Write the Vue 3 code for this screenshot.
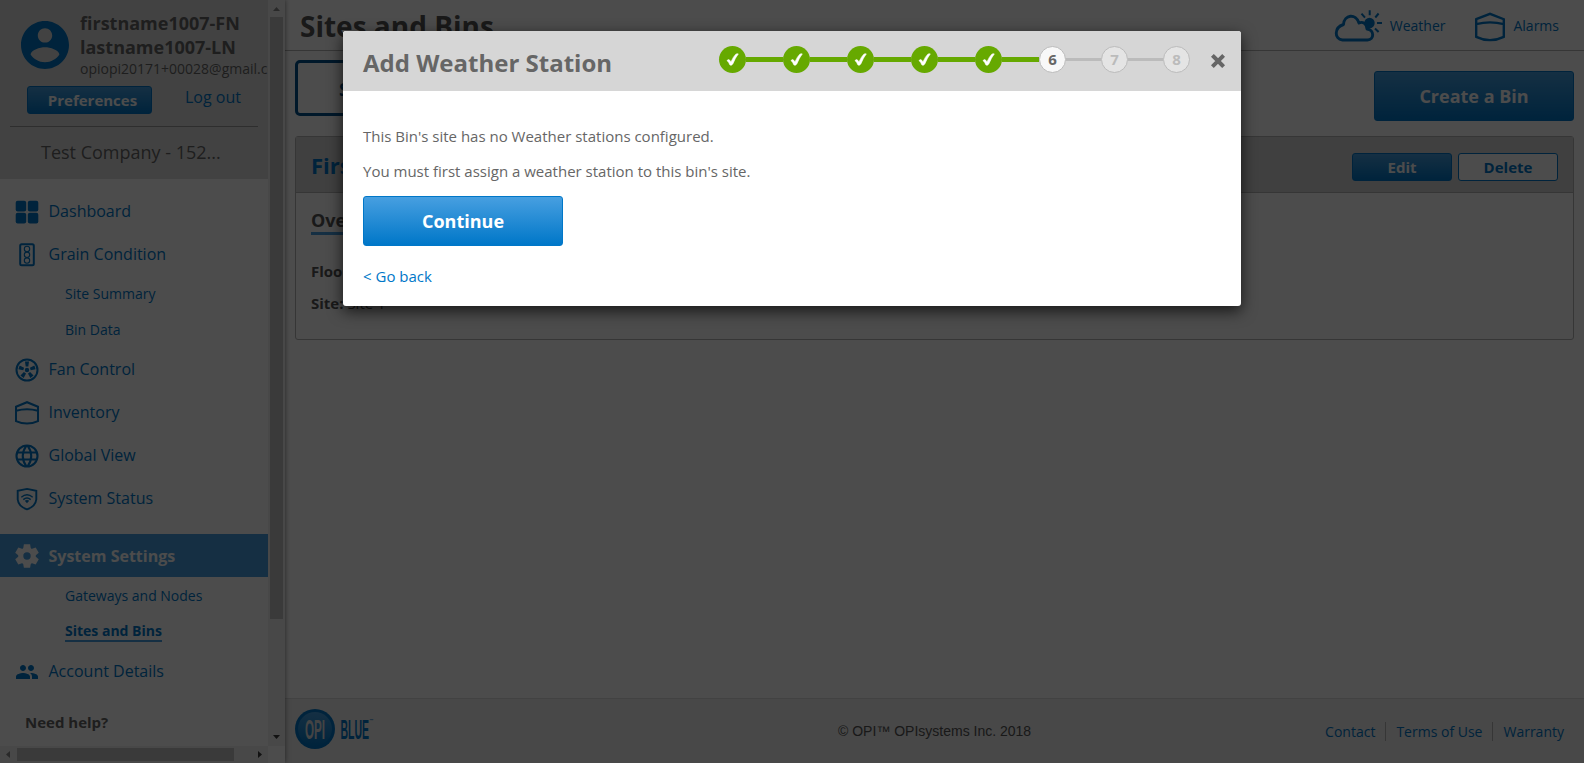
<script setup>
const mainNav = [
  { label: 'Dashboard', icon: 'grid' },
  { label: 'Grain Condition', icon: 'grain', children: ['Site Summary', 'Bin Data'] },
  { label: 'Fan Control', icon: 'fan' },
  { label: 'Inventory', icon: 'bin' },
  { label: 'Global View', icon: 'globe' },
  { label: 'System Status', icon: 'shield' },
]
const doneSteps = [1, 2, 3, 4, 5]
const blades = [0, 72, 144, 216, 288]
const gearTeeth = [0, 60, 120, 180, 240, 300]
</script>

<template>
  <div class="page">
    <aside class="sidebar">
      <div class="side-scroll">
        <div class="profile">
          <div class="user">
            <svg class="avatar" width="48" height="48" viewBox="2 2 20 20">
              <path fill="#0077c8" d="M12 2C6.48 2 2 6.48 2 12s4.48 10 10 10 10-4.48 10-10S17.52 2 12 2zm0 3c1.66 0 3 1.34 3 3s-1.34 3-3 3-3-1.34-3-3 1.34-3 3-3zm0 14.200c-2.500 0-4.710-1.280-6-3.220.03-1.990 4-3.080 6-3.080 1.990 0 5.970 1.090 6 3.080-1.290 1.940-3.500 3.220-6 3.220z" />
            </svg>
            <div class="who">
              <div class="name">firstname1007-FN</div>
              <div class="name">lastname1007-LN</div>
              <div class="email">opiopi20171+00028@gmail.com</div>
            </div>
          </div>
          <div class="user-actions">
            <button class="btn pref">Preferences</button>
            <a class="logout">Log out</a>
          </div>
          <div class="company">Test Company - 152...</div>
        </div>
        <nav class="nav">
          <template v-for="item in mainNav" :key="item.label">
            <a class="nav-item">
              <svg class="nav-icon" width="24" height="24" viewBox="0 0 24 24" fill="none" stroke="#0077c8" stroke-width="2">
                <g v-if="item.icon === 'grid'" fill="#0077c8" stroke="none">
                  <rect x=".7" y=".7" width="10.500" height="10.800" rx="2" /><rect x="12.800" y=".7" width="10.500" height="10.800" rx="2" />
                  <rect x=".7" y="12.800" width="10.500" height="10.800" rx="2" /><rect x="12.800" y="12.800" width="10.500" height="10.800" rx="2" />
                </g>
                <g v-else-if="item.icon === 'grain'">
                  <rect x="5.200" y="1.200" width="13.600" height="21" rx="1.500" />
                  <g stroke-width="1.100"><circle cx="12" cy="6" r="2.700" /><circle cx="12" cy="11.800" r="2.700" /><circle cx="12" cy="17.600" r="2.700" /></g>
                </g>
                <g v-else-if="item.icon === 'fan'">
                  <circle cx="12" cy="12" r="10.500" />
                  <circle cx="12" cy="12" r="2.200" fill="#0077c8" stroke="none" />
                  <path v-for="b in blades" :key="b" d="M10 3.600h4l-.7 4.900h-2.600z" fill="#0077c8" stroke="none" :transform="`rotate(${b} 12 12)`" />
                </g>
                <g v-else-if="item.icon === 'bin'" stroke-width="2">
                  <path d="M1 5.700 12 1.200l11 4.500v14.400Q12 25 1 20.100zM1 9.700Q12 6.700 23 9.700" />
                </g>
                <g v-else-if="item.icon === 'globe'" stroke-width="2.100">
                  <circle cx="12" cy="12" r="10.500" /><path d="M2.500 8.500h19M2.500 15.500h19M11.500 1.500Q4 12 11.500 22.500M12.500 1.500Q20 12 12.500 22.500" />
                </g>
                <g v-else>
                  <path stroke-width="1.900" d="M12 1.900 21.300 3.700v8.800Q20.500 19.500 12 22.300 3.500 19.500 2.700 12.500V3.700z" />
                  <path stroke-width="1.400" d="M6.300 10.300q5.700-5 11.400 0M8.300 12.600q3.700-3.200 7.400 0" /><path d="M9.800 13.800q2.200-1.600 4.400 0L12 16.300z" fill="#0077c8" stroke="none" />
                </g>
              </svg>
              <span>{{ item.label }}</span>
            </a>
            <a v-for="child in item.children" :key="child" class="nav-sub">{{ child }}</a>
          </template>
          <a class="nav-item active">
            <svg class="nav-icon" width="24" height="24" viewBox="0 0 24 24">
              <path v-for="g in gearTeeth" :key="g" fill="#fff" d="M8 5.500 8.900.2h6.200L16 5.500z" :transform="`rotate(${g} 12 12)`" />
              <circle cx="12" cy="12" r="6.200" fill="none" stroke="#fff" stroke-width="5" />
            </svg>
            <span>System Settings</span>
          </a>
          <a class="nav-sub short">Gateways and Nodes</a>
          <a class="nav-sub short current"><span>Sites and Bins</span></a>
          <a class="nav-item account">
            <svg class="nav-icon" width="24" height="24" viewBox="0 0 24 24">
              <path fill="#0077c8" d="M16 11c1.660 0 2.990-1.340 2.990-3S17.660 5 16 5s-3 1.340-3 3 1.340 3 3 3zm-8 0c1.660 0 2.990-1.340 2.990-3S9.660 5 8 5 5 6.340 5 8s1.340 3 3 3zm0 2c-2.330 0-7 1.170-7 3.500V19h14v-2.500c0-2.330-4.670-3.500-7-3.500zm8 0c-.29 0-.62.02-.97.05 1.160.84 1.970 1.970 1.970 3.450V19h6v-2.500c0-2.330-4.670-3.500-7-3.500z" />
            </svg>
            <span>Account Details</span>
          </a>
        </nav>
        <div class="help">Need help?</div>
      </div>
      <div class="vbar">
        <svg width="17" height="17"><path d="M5 11h7L8.500 7z" fill="#8b8b8b" /></svg>
        <div class="vthumb"></div>
        <svg class="down" width="17" height="17"><path d="M5 6h7L8.500 10z" fill="#3c3c3c" /></svg>
      </div>
      <div class="hbar">
        <svg width="17" height="17"><path d="M10 5v7L6 8.500z" fill="#8b8b8b" /></svg>
        <div class="hthumb"></div>
        <svg class="right" width="17" height="17"><path d="M7 5v7l4-3.500z" fill="#3c3c3c" /></svg>
      </div>
      <div class="corner"></div>
    </aside>

    <main class="main">
      <header class="top">
        <h1>Sites and Bins</h1>
        <a class="top-link">
          <svg width="50" height="34" viewBox="0 0 50 34">
            <g stroke="#0077c8" stroke-width="2" fill="none">
              <path d="M35.700 2.200v5M27.500 5.700l3.500 4M44.600 5.500l-3.300 4M43 15h5M41 20.500l3.600 3.500" />
            </g>
            <circle cx="35.500" cy="15" r="5.200" fill="#0077c8" />
            <path d="M8.500 32H33.500c7 0 7-10.300-.5-11C32.500 14.500 28 13.500 25 15 22 5 10 6.500 9.500 16.500 0 19.500 0 31 8.500 32z" fill="#fff" stroke="#0077c8" stroke-width="2.900" stroke-linejoin="round" />
          </svg>
          <span>Weather</span>
        </a>
        <a class="top-link alarms">
          <svg width="30" height="30" viewBox="0 0 30 30" fill="none" stroke="#0077c8" stroke-width="2.400">
            <path d="M1.200 7.200 15 1.800 28.800 7.200v17.600Q15 31.500 1.200 24.800zM1.200 12.200Q15 8.500 28.800 12.200" />
          </svg>
          <span>Alarms</span>
        </a>
      </header>
      <div class="toolbar">
        <div class="tab">Site and Bins</div>
        <button class="btn create">Create a Bin</button>
      </div>
      <section class="card">
        <div class="card-head">
          <h2>First Bin</h2>
          <button class="btn small">Edit</button>
          <button class="btn small ghost">Delete</button>
        </div>
        <div class="card-body">
          <div class="overview">Overview</div>
          <div class="field"><b>Floor:</b> Flat</div>
          <div class="field"><b>Site:</b> Site 1</div>
        </div>
      </section>
      <footer class="footer">
        <svg class="logo" width="80" height="40" viewBox="0 0 80 40">
          <defs><linearGradient id="opi" x1="0" y1="0" x2="0" y2="1"><stop offset="0" stop-color="#479fe0" /><stop offset="1" stop-color="#0077c8" /></linearGradient></defs>
          <circle cx="20" cy="20" r="20" fill="#0077c8" /><circle cx="20" cy="20" r="17" fill="url(#opi)" />
          <text x="10" y="29.500" font-size="27" textLength="20" lengthAdjust="spacingAndGlyphs" fill="#e4e4e4">OPI</text>
          <text x="45.500" y="30" font-size="28" textLength="28.500" lengthAdjust="spacingAndGlyphs" fill="#0077c8">BLUE</text>
          <text x="74.500" y="13" font-size="4" fill="#0077c8">™</text>
        </svg>
        <span class="copy">© OPI™ OPIsystems Inc. 2018</span>
        <div class="links"><a>Contact</a><a>Terms of Use</a><a>Warranty</a></div>
      </footer>
    </main>

    <div class="overlay"></div>

    <div class="modal">
      <div class="modal-head">
        <h3>Add Weather Station</h3>
        <div class="steps">
          <template v-for="s in doneSteps" :key="s">
            <div class="step done">
              <svg width="13" height="13" viewBox="0 0 13 13"><path fill="#fff" stroke="#fff" stroke-width=".6" d="M1 7.600Q2.400 6 3.600 7L4.900 9Q7.400 3.400 9.800 1.200 11 .3 12.300.9 9.200 4.800 6.800 11 5.400 13 3.900 11.900 2.900 9.300 1 7.600z" /></svg>
            </div>
            <div class="bar green"></div>
          </template>
          <div class="step now">6</div>
          <div class="bar"></div>
          <div class="step">7</div>
          <div class="bar"></div>
          <div class="step">8</div>
        </div>
        <svg class="close" width="16" height="16" viewBox="0 0 16 16"><path d="M3 3 13 13M13 3 3 13" stroke="#666" stroke-width="4.600" stroke-linecap="square" stroke-linejoin="round" transform="translate(1.200 1.200) scale(.85)" /></svg>
      </div>
      <div class="modal-body">
        <p>This Bin's site has no Weather stations configured.</p>
        <p>You must first assign a weather station to this bin's site.</p>
        <button class="btn continue">Continue</button>
        <a class="back">&lt; Go back</a>
      </div>
    </div>
  </div>
</template>

<style>
body { margin: 0; overflow: hidden; }
</style>

<style scoped>
* { box-sizing: border-box; }
.page {
  position: relative; display: flex; width: 1584px; height: 763px; overflow: hidden;
  background: #fff; color: #666; font-family: "Open Sans", "Noto Sans", sans-serif; font-size: 15px;
}
a { color: #0077c8; }
h1, h2, h3, p { margin: 0; }
.btn {
  display: block; padding: 0; border: 1px solid #0077c8; border-radius: 3px; color: #fff;
  font: bold 15px "Open Sans", sans-serif; background: linear-gradient(#479fe0, #0077c8);
}
.sidebar {
  display: grid; grid-template: 746px 17px / 268px 17px; width: 285px; flex: none; z-index: 1;
  background: #fff; box-shadow: 0 0 5px rgba(0, 0, 0, .5);
}
.side-scroll { overflow: hidden; }
.profile { height: 179px; padding-top: 11px; background: #dedede; }
.user { display: flex; height: 75px; }
.avatar { flex: none; margin: 10px 11px 0 21px; }
.name { font-size: 18px; font-weight: bold; line-height: 24px; white-space: nowrap; }
.email { font-size: 14px; line-height: 20px; white-space: nowrap; }
.user-actions { display: flex; height: 41px; margin: 0 10px; border-bottom: 1px solid #999; }
.pref { width: 125px; height: 28px; margin-left: 17px; padding-left: 6px; }
.logout { margin-left: 33px; font-size: 16px; line-height: 22px; }
.company { padding-left: 41px; font-size: 18px; line-height: 50px; }
.nav { padding-top: 11px; }
.nav-item { display: flex; align-items: center; height: 43px; padding-left: 15px; font-size: 16px; line-height: 43px; }
.nav-icon { flex: none; margin-right: 9.500px; }
.nav-sub { display: block; height: 36px; padding-left: 65px; font-size: 14px; line-height: 35px; }
.active { margin: 14px 0 1px; padding-top: 1px; color: #fff; font-weight: bold; background: #479fe0; }
.short { height: 35px; }
.current { font-weight: bold; }
.current span { display: inline-block; height: 29px; border-bottom: 2px solid #479fe0; }
.account { margin-top: 2px; }
.help { padding: 18px 0 0 25px; font-weight: bold; line-height: 22px; }
.vbar { display: flex; flex-direction: column; background: #f1f1f1; }
.vthumb { width: 13px; height: 602px; margin-left: 2px; background: #c1c1c1; }
.down { margin-top: auto; }
.vbar svg, .hbar svg { flex: none; }
.hbar { display: flex; align-items: center; background: #f1f1f1; }
.hthumb { width: 217px; height: 13px; background: #c1c1c1; }
.right { margin-left: auto; }
.corner { background: #fff; }
.main { display: flex; flex-direction: column; width: 1299px; }
.top { display: flex; align-items: center; height: 51px; padding: 0 25px 0 15px; border-bottom: 1px solid #b4b4b4; }
h1 { margin-right: auto; padding-top: 2px; font-size: 28px; line-height: 48px; color: #555; }
.top-link { display: flex; align-items: center; font-size: 14px; }
.top-link svg { margin-right: 6px; }
.alarms { margin-left: 30px; }
.alarms svg { margin: 3px 8px 0 0; }
.toolbar { display: flex; justify-content: space-between; height: 85px; padding: 9px 10px 0; }
.tab {
  width: 200px; height: 56px; padding-left: 41px; border: 3px solid #00538c; border-radius: 5px;
  color: #00538c; font-size: 18px; font-weight: bold; line-height: 52px;
}
.create { width: 200px; height: 50px; margin-top: 11px; font-size: 18px; }
.card { height: 204px; margin: 0 10px; border: 1px solid #b4b4b4; border-radius: 3px; }
.card-head {
  display: flex; align-items: center; height: 56px; padding: 5px 15px 0;
  background: #d6d6d6; border-bottom: 1px solid #b4b4b4;
}
h2 { margin-right: auto; padding-bottom: 4px; color: #0077c8; font-size: 22px; line-height: 46px; }
.small { width: 100px; height: 28px; }
.ghost { margin-left: 6px; background: #fff; color: #0077c8; }
.card-body { padding: 14px 15px 0; color: #555; }
.overview {
  display: block; width: 85px; height: 28px; margin-bottom: 20px; border-bottom: 3px solid #479fe0;
  font-size: 18px; font-weight: bold; line-height: 26px;
}
.field { line-height: 32px; }
.footer {
  display: flex; align-items: center; height: 65px; margin-top: auto; padding: 0 20px 4px 10px;
  background: #f0f0f0; border-top: 1px solid #ddd;
}
.logo { font-family: "Liberation Sans", sans-serif; font-weight: bold; }
.copy { margin-left: 463px; padding-top: 4px; color: #555; font: 14px "Liberation Sans", Arial, sans-serif; }
.links { display: flex; margin-left: auto; font-size: 14px; line-height: 19px; padding-top: 4px; }
.links a + a { margin-left: 10px; padding-left: 10px; border-left: 1px solid #b4b4b4; }
.overlay { position: absolute; inset: 0; z-index: 2; background: rgba(0, 0, 0, .7); }
.modal {
  position: absolute; z-index: 3; left: 343px; top: 31px; width: 898px; height: 275px; overflow: hidden;
  border-radius: 3px; background: #fff; box-shadow: 0 5px 15px rgba(0, 0, 0, .7);
}
.modal-head { display: flex; height: 60px; padding: 0 15px 0 20px; background: #d6d6d6; }
h3 { margin-right: auto; font-size: 24px; line-height: 63px; }
.steps { display: flex; align-items: center; height: 27px; margin: 15px 20px 0 0; }
.step {
  display: flex; align-items: center; justify-content: center; width: 27px; height: 27px; padding-bottom: 2px;
  border: 1px solid #bbb; border-radius: 50%; background: #e4e4e4; color: #bbb; font-weight: bold;
}
.done { padding: 0; border: 0; background: #66a900; }
.now { background: #f8f8f8; color: #666; }
.bar { width: 35px; height: 3px; background: #bbb; }
.green { width: 37px; height: 5px; background: #66a900; }
.close { margin-top: 22px; }
.modal-body { padding: 28px 20px 0; }
p { line-height: 35px; }
.continue { width: 200px; height: 50px; margin-top: 7px; font-size: 18px; }
.back { display: block; margin-top: 18px; line-height: 24px; }
</style>
